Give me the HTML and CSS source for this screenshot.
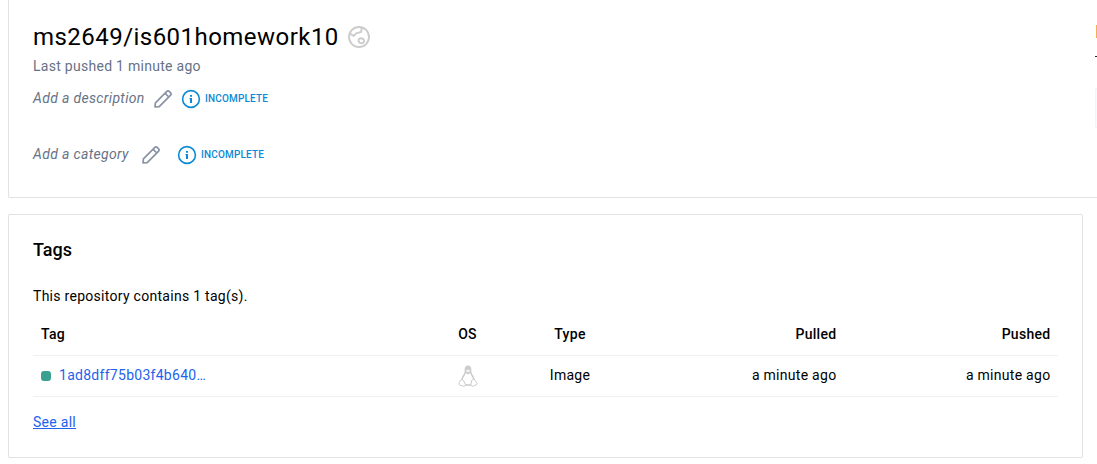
FILE: index.html
```html
<!DOCTYPE html>
<html lang="en">
<head>
<meta charset="utf-8">
<title>ms2649/is601homework10</title>
<link rel="stylesheet" href="styles.css">
</head>
<body>
<svg class="defs" width="0" height="0">
  <symbol id="pencil" viewBox="0 0 20 20">
    <path d="M2 18l.4-4.200L13.600 2.600a2 2 0 0 1 2.800 0l1 1a2 2 0 0 1 0 2.800L6.200 17.600zM12 4.200l3.800 3.800" fill="none" stroke="currentColor" stroke-width="1.700" stroke-linejoin="round"/>
  </symbol>
  <symbol id="info" viewBox="0 0 20 20">
    <circle cx="10" cy="10" r="8.400" fill="none" stroke="currentColor" stroke-width="1.600"/>
    <path d="M9 6h2v1.700H9zM8.500 9H11v5H9v-3.800h-.5z" fill="currentColor"/>
  </symbol>
</svg>
<section class="card summary">
  <div class="info">
    <h1 class="title">ms2649/is601homework10
      <svg class="globe" viewBox="0 0 24 24" fill="none" stroke="currentColor" stroke-width="1.900">
        <circle cx="12" cy="12" r="10"/>
        <path d="M2.300 8.300l4.400 2.600 2.500-2.600 5.100-1.500.3-4.300M12 14l2.300-.9 2.300 1.200.5 2.300-1.800 1.700-2.800-.4-.9-1.900z" stroke-linejoin="round"/>
      </svg>
    </h1>
    <p class="pushed">Last pushed 1 minute ago</p>
    <div class="field"><em class="description">Add a description</em><svg class="icon pencil"><use href="#pencil"/></svg><svg class="icon notice"><use href="#info"/></svg><span class="status">INCOMPLETE</span></div>
    <div class="field category-row"><em class="category">Add a category</em><svg class="icon pencil"><use href="#pencil"/></svg><svg class="icon notice"><use href="#info"/></svg><span class="status">INCOMPLETE</span></div>
  </div>
  <aside class="commands">
    <div class="marker"></div>
    <div class="dash"></div>
    <div class="command-box"></div>
  </aside>
</section>
<section class="card tags">
  <h2 class="heading">Tags</h2>
  <p class="count">This repository contains 1 tag(s).</p>
  <table class="table">
    <colgroup><col class="c-tag"><col class="c-os"><col class="c-type"><col class="c-pulled"><col></colgroup>
    <thead><tr><th>Tag</th><th class="center">OS</th><th class="center">Type</th><th class="right">Pulled</th><th class="right">Pushed</th></tr></thead>
    <tbody><tr>
      <td><div class="tag"><span class="dot"></span><a class="link">1ad8dff75b03f4b640…</a></div></td>
      <td class="center"><svg class="tux" viewBox="0 0 20 24">
        <path d="M10 1.500c-2 0-3.300 1.400-3.300 3.600 0 3-.2 4-1.800 6.400-1.300 2-2 4-1.600 6L7 21.400h6l3.700-3.900c.4-2-.3-4-1.600-6-1.600-2.400-1.800-3.400-1.800-6.400 0-2.200-1.300-3.600-3.300-3.600z" fill="#ccc"/>
        <path d="M7.700 9.300l2.300 1.100 2.300-1.100c.4 2.200 2.900 4.400 3.100 7.200.1 2.200-1.400 3.400-2.400 4H7c-1.200-.8-2.400-2.200-2.300-4.200.2-2.800 2.400-4.800 3-7z" fill="#fff"/>
        <path d="M8 6.300l2-.7 2 .7-.2 1.200-1.800.9-1.800-.9z" fill="#f1f1f1"/>
        <path d="M3.500 15.500c-.2 1-.5 1.300-1.600 1.500-.8.300-.2 1.200-.8 2.500-.4 1 .1 1.500 1 1.700l3.500 1c1.500.3 2.300-1 1.700-2.200L5.200 16.300c-.5-.7-1-1.200-1.700-.8zM16.500 15.500c.2 1 .5 1.300 1.300 1.700.7.400.1 1.100 1 1.800.7.800.2 1.400-.5 1.700l-3 1.500c-1.500.5-2.700-.5-2.400-2l.9-3.900c.5-.8 1.700-1.300 2.700-.8zM7.200 21h5.800" fill="#fff" stroke="#c9c9c9"/>
      </svg></td>
      <td class="center">Image</td><td class="right">a minute ago</td><td class="right">a minute ago</td>
    </tr></tbody>
  </table>
  <a class="link all">See all</a>
</section>
</body>
</html>
```
FILE: styles.css
```css
* { box-sizing: border-box; }
body { margin: 0; padding: 0 0 0 8px; background: #fff; color: #000; font: 14px/20px Roboto, sans-serif; letter-spacing: 0.28px; overflow: hidden; height: 464px; }
h1, h2, p { margin: 0; }
.defs { display: block; }
.card { border: 1px solid #e1e2e6; border-radius: 2px; }
.summary { display: flex; width: 1089px; height: 198px; border-top: 0; border-right: 0; border-radius: 0 0 0 2px; }
.info { flex: none; width: 1086px; padding: 21px 0 0 24px; }
.title { display: flex; align-items: center; height: 32px; font-size: 24px; font-weight: 400; line-height: 32px; letter-spacing: 0.46px; }
.globe { width: 24px; height: 24px; margin-left: 8px; color: #ccc; }
.pushed { margin-top: 3px; color: #677285; }
.field { display: flex; align-items: center; height: 24px; margin-top: 11px; color: #677285; }
.category-row { margin-top: 32px; }
.description, .category { padding-bottom: 2px; letter-spacing: 0.34px; }
.description { width: 120px; }
.category { width: 108px; }
.icon { width: 20px; height: 20px; flex: none; }
.pencil { color: #8993a5; }
.notice { margin: 0 4px 0 8px; color: #0b8ad6; }
.category-row .notice { margin-left: 16px; }
.status { color: #0b8ad6; font-size: 10px; font-weight: 500; letter-spacing: 0.16px; }
.commands { flex: none; width: 2px; padding-top: 25px; }
.marker { height: 13px; margin-left: 1px; background: #f7ae4d; }
.dash { height: 1px; margin-top: 18px; background: #222; }
.command-box { height: 40px; margin-top: 31px; border: 1px solid #f3f4f5; border-right: 0; border-radius: 2px 0 0 2px; background: #f9fafb; }
.tags { width: 1075px; height: 244px; margin-top: 16px; padding: 23px 24px 0; }
.heading { font-size: 18px; font-weight: 500; line-height: 24px; letter-spacing: 0; }
.count { margin-top: 24px; }
.table { width: 1025px; margin-top: 8px; border-collapse: separate; border-spacing: 0; table-layout: fixed; }
.c-tag { width: 386px; }
.c-os { width: 97px; }
.c-type { width: 108px; }
.c-pulled { width: 220px; }
th, td { padding: 0 8px; border-bottom: 1px solid #f0f1f2; text-align: left; vertical-align: middle; }
th { height: 42px; padding-bottom: 1px; font-weight: 500; }
td { height: 41px; padding-bottom: 2px; }
.center { text-align: center; }
.right { padding-right: 7.6px; text-align: right; }
.tag { display: flex; align-items: center; }
.dot { width: 10px; height: 10px; margin: 2px 8px 0 0; border-radius: 3px; background: #3ba08f; }
.link { color: #1d63ed; }
.tux { display: block; width: 20px; height: 24px; margin: 2px auto 0; }
.all { display: inline-block; margin-top: 15px; text-decoration: underline; }
```
